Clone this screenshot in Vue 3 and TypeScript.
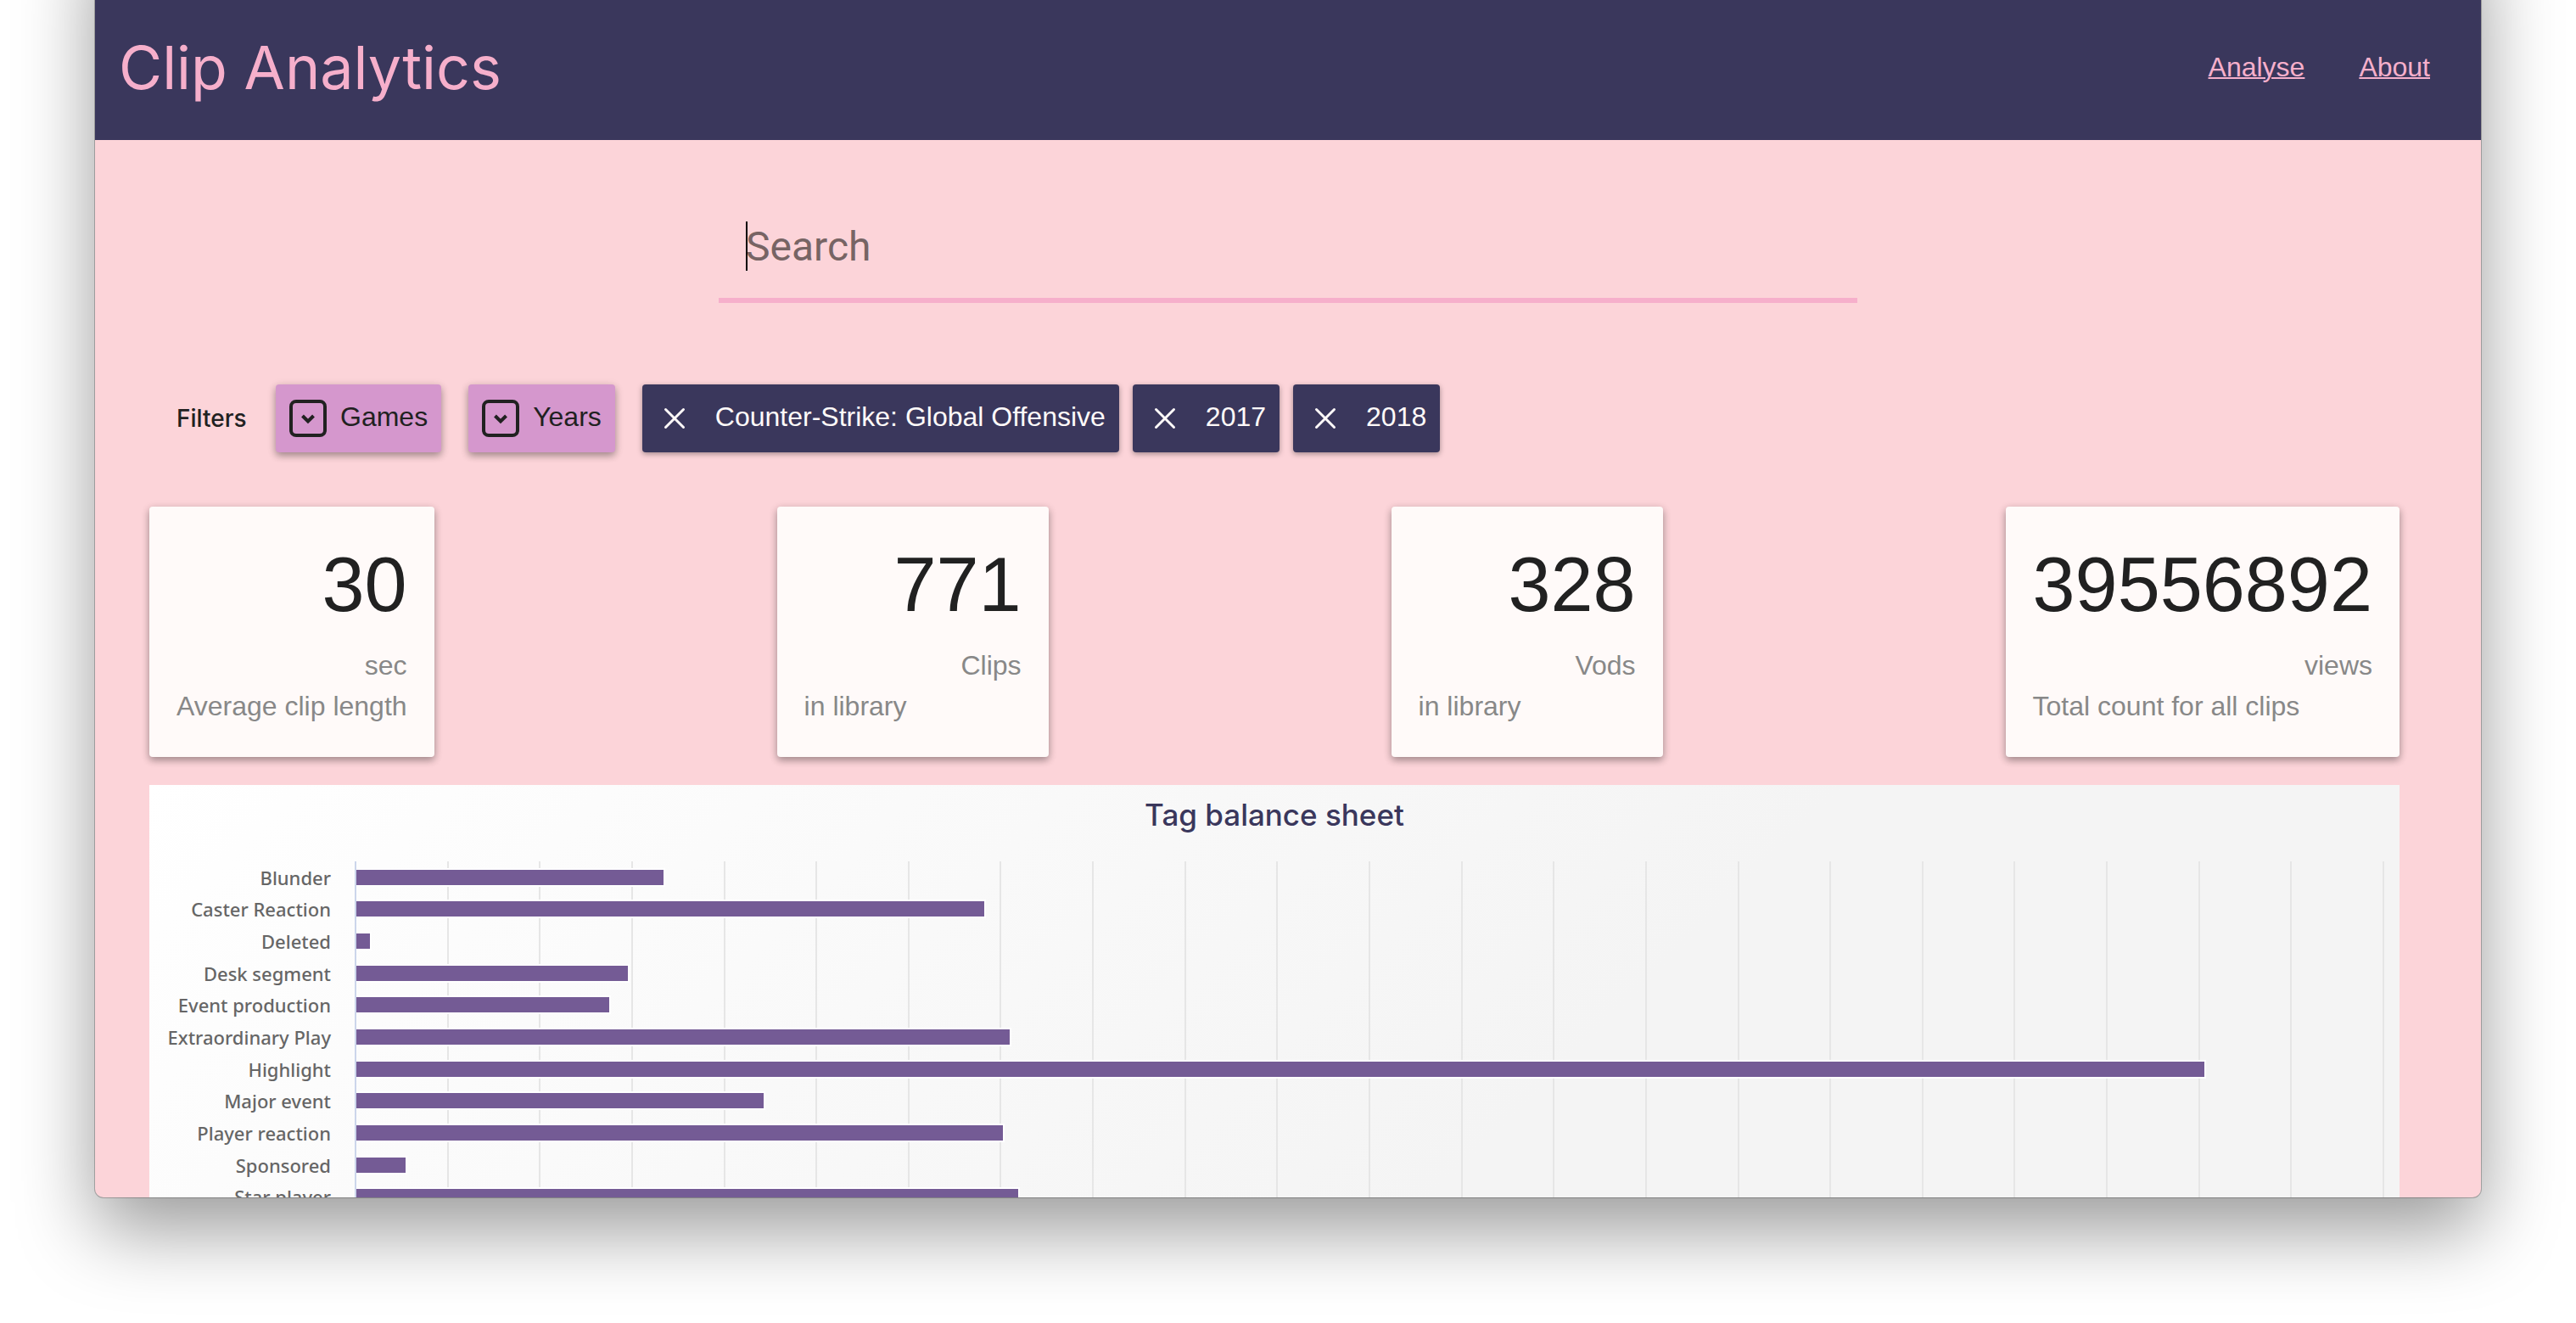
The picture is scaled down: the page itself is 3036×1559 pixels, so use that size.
<script setup lang="ts">
import { ref } from 'vue'

interface Stat {
  value: string
  unit: string
  caption: string
}

interface Tag {
  name: string
  count: number
}

const query = ref('')
const menus = ['Games', 'Years']
const activeFilters = ref(['Counter-Strike: Global Offensive', '2017', '2018'])

const stats: Stat[] = [
  { value: '30', unit: 'sec', caption: 'Average clip length' },
  { value: '771', unit: 'Clips', caption: 'in library' },
  { value: '328', unit: 'Vods', caption: 'in library' },
  { value: '39556892', unit: 'views', caption: 'Total count for all clips' },
]

const intervals = 22
const axisMax = 2200
const tags: Tag[] = [
  { name: 'Blunder', count: 333 },
  { name: 'Caster Reaction', count: 681 },
  { name: 'Deleted', count: 15 },
  { name: 'Desk segment', count: 295 },
  { name: 'Event production', count: 274 },
  { name: 'Extraordinary Play', count: 709 },
  { name: 'Highlight', count: 2005 },
  { name: 'Major event', count: 442 },
  { name: 'Player reaction', count: 701 },
  { name: 'Sponsored', count: 53 },
  { name: 'Star player', count: 718 },
]

function barWidth(count: number): string {
  return `${(count / axisMax) * 100}%`
}

function removeFilter(name: string): void {
  activeFilters.value = activeFilters.value.filter((f) => f !== name)
}
</script>

<template>
  <div class="desktop">
    <div class="window">
      <header class="header">
        <h1 class="brand">Clip Analytics</h1>
        <nav class="nav">
          <a href="#analyse">Analyse</a>
          <a href="#about">About</a>
        </nav>
      </header>

      <main class="main">
        <div class="search">
          <input v-model="query" class="search-input" type="text" placeholder="Search" aria-label="Search" />
          <span class="caret" aria-hidden="true"></span>
        </div>

        <div class="filters">
          <span class="filters-label">Filters</span>
          <button v-for="menu in menus" :key="menu" class="menu-button" type="button">
            <svg class="icon" viewBox="0 0 44 44" fill="none" stroke="currentColor" stroke-width="4" aria-hidden="true">
              <rect x="2" y="2" width="40" height="40" rx="6" />
              <path d="M15.5 19L22 25.5L28.5 19" />
            </svg>
            <span class="button-text">{{ menu }}</span>
          </button>
          <div class="chips">
            <button v-for="name in activeFilters" :key="name" class="chip" type="button" @click="removeFilter(name)">
              <svg class="icon" viewBox="0 0 44 44" fill="none" stroke="currentColor" stroke-width="3" stroke-linecap="round" aria-hidden="true">
                <path d="M11.5 11.5L32.5 32.5M32.5 11.5L11.5 32.5" />
              </svg>
              <span class="button-text">{{ name }}</span>
            </button>
          </div>
        </div>

        <section class="stats">
          <article v-for="stat in stats" :key="stat.unit" class="card">
            <p class="card-value">{{ stat.value }}</p>
            <p class="card-unit">{{ stat.unit }}</p>
            <p class="card-caption">{{ stat.caption }}</p>
          </article>
        </section>

        <section class="chart">
          <h2 class="chart-title">Tag balance sheet</h2>
          <div class="chart-body">
            <ul class="labels">
              <li v-for="tag in tags" :key="tag.name">{{ tag.name }}</li>
            </ul>
            <div class="plot">
              <div class="gridlines" aria-hidden="true">
                <span v-for="n in intervals" :key="n"></span>
              </div>
              <div class="bars">
                <div v-for="tag in tags" :key="tag.name" class="bar-row">
                  <div class="bar" :style="{ width: barWidth(tag.count) }"></div>
                </div>
              </div>
            </div>
          </div>
        </section>
      </main>
    </div>
  </div>
</template>

<style>
html,
body {
  margin: 0;
  background: #fff;
}
</style>

<style scoped>
.desktop {
  box-sizing: border-box;
  display: flex;
  height: 100vh;
  padding: 0 112px 148px;
  overflow: hidden;
  font-family: "Liberation Sans", Arial, sans-serif;
  font-size: 32px;
  color: #212121;
}

.window {
  flex: 1;
  min-width: 0;
  margin-top: -96px;
  border-top: 96px solid #3a375c;
  border-radius: 0 0 10px 10px;
  overflow: hidden;
  background: #fcd4d9;
  box-shadow: 0 0 0 1px rgba(0, 0, 0, 0.24), 0 38px 90px rgba(0, 0, 0, 0.4);
}

.header {
  display: flex;
  align-items: center;
  justify-content: space-between;
  box-sizing: border-box;
  height: 165px;
  padding: 0 60px 6px 28px;
  background: #3a375c;
  color: #f6afcb;
}

.brand {
  margin: 0;
  font-family: Inter, sans-serif;
  font-size: 70px;
  font-weight: 400;
  line-height: 80px;
}

.nav {
  display: flex;
  gap: 64px;
}

.nav a {
  color: inherit;
  text-decoration: underline;
  text-decoration-thickness: 2px;
}

.main {
  padding: 64px 96px 0 64px;
}

/* the main area is 32px wider on its right side; this centres the field on the window */
.search {
  position: relative;
  width: calc(50% + 16px);
  margin: 0 0 96px calc(25% + 8px);
}

.search-input {
  display: block;
  box-sizing: border-box;
  width: 100%;
  height: 128px;
  padding: 0 32px;
  border: 0;
  border-bottom: 6px solid #f6afcb;
  border-radius: 0;
  outline: 0;
  background: transparent;
  font-family: Roboto, sans-serif;
  font-size: 48px;
  color: #212121;
}

.search-input::placeholder {
  color: #776464;
  opacity: 1;
}

.caret {
  position: absolute;
  top: 32px;
  left: 32px;
  width: 2px;
  height: 58px;
  background: #000;
}

.filters {
  display: flex;
  align-items: center;
  gap: 32px;
  margin-bottom: 64px;
  padding-left: 32px;
}

.filters-label {
  min-width: 85px;
  font-family: Inter, sans-serif;
  font-size: 28px;
  font-weight: 500;
}

.chips {
  display: flex;
  gap: 16px;
}

.menu-button,
.chip {
  display: flex;
  align-items: center;
  height: 80px;
  padding: 0 16px;
  border: 0;
  border-radius: 4px;
  font: inherit;
  white-space: nowrap;
}

.menu-button {
  gap: 16px;
  background: #d597cd;
  color: #212121;
  box-shadow: 0 4px 8px rgba(0, 0, 0, 0.3), 0 2px 12px rgba(0, 0, 0, 0.1);
}

.chip {
  gap: 26px;
  background: #3a375c;
  color: #fffaf9;
  box-shadow: 0 2px 6px rgba(0, 0, 0, 0.36);
}

.button-text {
  padding-bottom: 4px;
}

.icon {
  flex: none;
  width: 44px;
  height: 44px;
}

.stats {
  display: flex;
  justify-content: space-between;
  margin-bottom: 33px;
}

.card {
  box-sizing: border-box;
  min-width: 320px;
  padding: 32px 32px 36px;
  border-radius: 4px;
  background: #fffaf9;
  box-shadow: 0 4px 8px rgba(0, 0, 0, 0.3), 0 2px 12px rgba(0, 0, 0, 0.1);
}

.card p {
  margin: 0;
  line-height: 48px;
  color: #888;
}

.card .card-value {
  margin-bottom: 11px;
  font-size: 90px;
  line-height: 120px;
  text-align: right;
  color: #212121;
}

.card .card-unit {
  text-align: right;
}

.chart {
  padding-right: 18px;
  background: linear-gradient(135deg, #fff 0, #f4f4f4 1414px);
}

.chart-title {
  margin: 0 -18px 0 0;
  padding: 15px 0 35px;
  font-family: Inter, sans-serif;
  font-size: 35px;
  font-weight: 500;
  line-height: 40px;
  text-align: center;
  color: #3a375c;
}

.chart-body {
  display: grid;
  grid-template-columns: 242px 1fr;
  height: 414px;
}

.labels {
  display: grid;
  grid-auto-rows: 1fr;
  align-items: center;
  margin: 0;
  padding: 0 28px 0 0;
  list-style: none;
  font-family: "Noto Sans", sans-serif;
  font-size: 22px;
  font-weight: 500;
  line-height: 30px;
  text-align: right;
  white-space: nowrap;
  color: #666;
}

.plot {
  display: grid;
  border-left: 2px solid #ccd6eb;
}

.gridlines,
.bars {
  display: grid;
  grid-area: 1 / 1;
}

.gridlines {
  grid-auto-flow: column;
  grid-auto-columns: 1fr;
}

.gridlines span {
  border-right: 2px solid #e6e6e6;
}

.bars {
  grid-auto-rows: 1fr;
}

.bar-row {
  display: flex;
  align-items: center;
}

.bar {
  height: 18px;
  border: 2px solid #fff;
  border-left: 0;
  background: #745b95;
}
</style>
